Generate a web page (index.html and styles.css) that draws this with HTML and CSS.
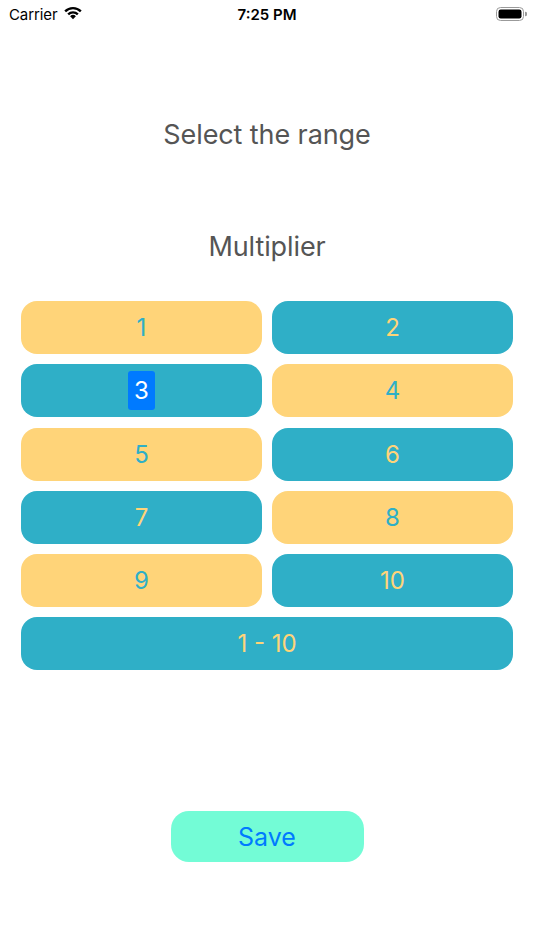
FILE: index.html
```html
<!DOCTYPE html>
<html>
<head>
<meta charset="utf-8">
<link rel="stylesheet" href="styles.css">
</head>
<body>
<div class="screen">
  <div class="status">
    <div class="left">
      <span class="carrier">Carrier</span>
      <svg class="wifi" width="20" height="15" viewBox="0 0 18 13">
        <path d="M9 12.6 L6.4 9.9 A3.7 3.7 0 0 1 11.6 9.9 Z" fill="#000"/>
        <path d="M3.9 7.4 A7.3 7.3 0 0 1 14.1 7.4 L12.6 8.9 A5.2 5.2 0 0 0 5.4 8.9 Z" fill="#000"/>
        <path d="M1.2 4.7 A11.1 11.1 0 0 1 16.8 4.7 L15.3 6.2 A9 9 0 0 0 2.7 6.2 Z" fill="#000"/>
      </svg>
    </div>
    <div class="time">7:25 PM</div>
    <div class="right">
      <svg width="31" height="14" viewBox="0 0 31 14">
        <rect x="0.5" y="0.5" width="27" height="13" rx="4" fill="none" stroke="#9a9a9a" stroke-width="1"/>
        <rect x="2.5" y="2.5" width="23" height="9" rx="2.2" fill="#000"/>
        <path d="M29 4.7 A2.2 2.2 0 0 1 29 9.3 Z" fill="#9a9a9a"/>
      </svg>
    </div>
  </div>

  <h1 class="title">Select the range</h1>
  <h2 class="subtitle">Multiplier</h2>

  <div class="grid">
    <button class="btn y">1</button>
    <button class="btn t">2</button>
    <button class="btn t"><span class="sel">3</span></button>
    <button class="btn y">4</button>
    <button class="btn y">5</button>
    <button class="btn t">6</button>
    <button class="btn t">7</button>
    <button class="btn y">8</button>
    <button class="btn y">9</button>
    <button class="btn t">10</button>
    <button class="btn t wide">1 - 10</button>
  </div>

  <div class="save-wrap">
    <button class="save">Save</button>
  </div>
</div>
</body>
</html>
```
FILE: styles.css
```css
* { box-sizing: border-box; }
html, body { margin: 0; padding: 0; background: #fff; }
body { font-family: Inter, "Liberation Sans", sans-serif; }
.screen { width: 534px; height: 950px; display: flex; flex-direction: column; }

.status {
  height: 28px;
  display: grid;
  grid-template-columns: 1fr auto 1fr;
  align-items: center;
  padding: 0 7px 0 9px;
  font-size: 15px;
  color: #000;
}
.left { display: flex; align-items: center; gap: 6px; }
.carrier { font-weight: 400; letter-spacing: -0.1px; }
.wifi { margin-top: -3px; }
.time { font-weight: 600; text-align: center; padding-right: 2px; }
.right { display: flex; justify-content: flex-end; align-items: center; }

.title {
  margin: 90px 0 0;
  font-size: 27px;
  font-weight: 400;
  color: #555555;
  text-align: center;
  line-height: 34px;
  letter-spacing: -0.1px;
}
.subtitle {
  margin: 78px 0 0;
  font-size: 27px;
  font-weight: 400;
  color: #555555;
  text-align: center;
  line-height: 34px;
  letter-spacing: -0.1px;
}

.grid {
  margin: 37px 21px 0;
  display: grid;
  grid-template-columns: 1fr 1fr;
  column-gap: 10px;
  row-gap: 10.3px;
}
.btn {
  height: 53px;
  border: none;
  border-radius: 16px;
  font-family: Inter, "Liberation Sans", sans-serif;
  font-size: 24px;
  font-weight: 400;
  display: flex;
  align-items: center;
  justify-content: center;
  padding: 0;
}
.y { background: #FFD479; color: #2FAFC7; }
.t { background: #2FAFC7; color: #FFD479; }
.wide { grid-column: 1 / span 2; }
.sel {
  background: #007AFF;
  color: #fff;
  border-radius: 3px;
  width: 27px;
  height: 39px;
  display: flex;
  align-items: center;
  justify-content: center;
}

.save-wrap { margin-top: 141px; display: flex; justify-content: center; }
.save {
  width: 193px;
  height: 51px;
  border: none;
  border-radius: 18px;
  background: #73FCD6;
  color: #007AFF;
  font-family: Inter, "Liberation Sans", sans-serif;
  font-size: 25px;
  font-weight: 400;
  padding: 0;
}
```
